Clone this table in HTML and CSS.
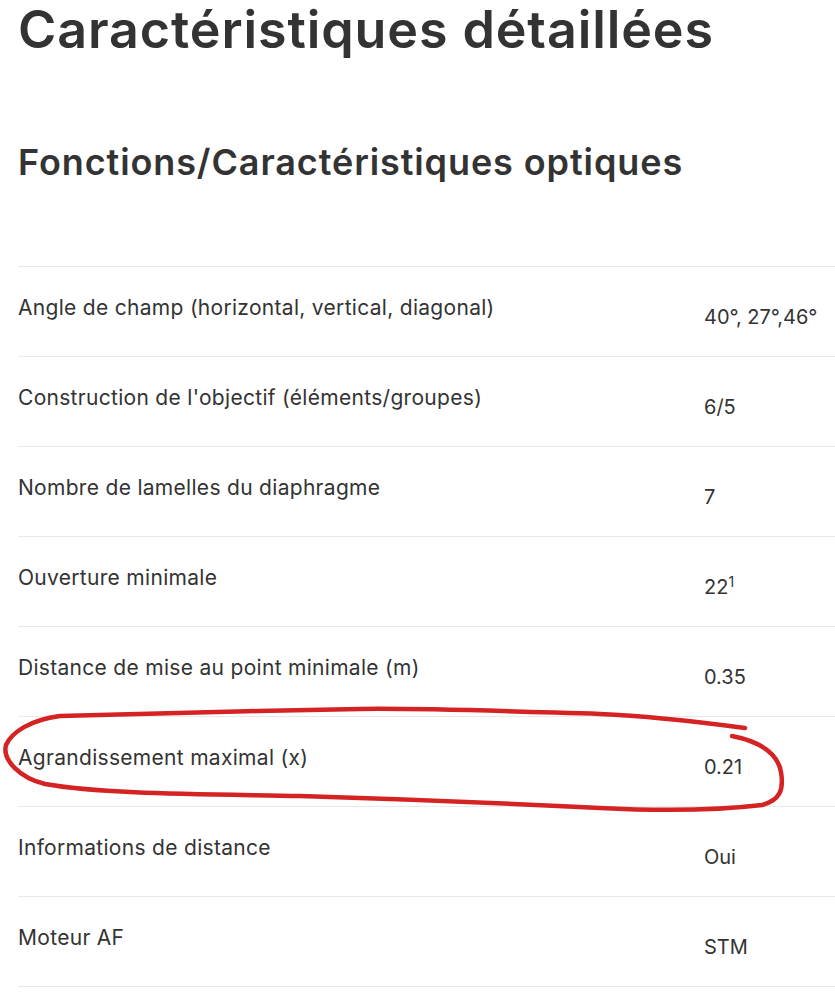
FILE: index.html
```html
<!DOCTYPE html>
<html lang="fr">
<head>
<meta charset="utf-8">
<title>Caractéristiques détaillées</title>
<link rel="stylesheet" href="styles.css">
</head>
<body>
<main class="page">
  <h1 class="title">Caractéristiques détaillées</h1>
  <h2 class="subtitle">Fonctions/Caractéristiques optiques</h2>
  <div class="specs">
    <div class="row"><div class="label">Angle de champ (horizontal, vertical, diagonal)</div><div class="value">40°, 27°,46°</div></div>
    <div class="row"><div class="label">Construction de l'objectif (éléments/groupes)</div><div class="value">6/5</div></div>
    <div class="row"><div class="label">Nombre de lamelles du diaphragme</div><div class="value">7</div></div>
    <div class="row"><div class="label">Ouverture minimale</div><div class="value">22<sup class="note">1</sup></div></div>
    <div class="row"><div class="label">Distance de mise au point minimale (m)</div><div class="value">0.35</div></div>
    <div class="row"><div class="label">Agrandissement maximal (x)</div><div class="value">0.21</div></div>
    <div class="row"><div class="label">Informations de distance</div><div class="value">Oui</div></div>
    <div class="row"><div class="label">Moteur AF</div><div class="value">STM</div></div>
    <div class="row row-empty"></div>
    <svg class="annotation" width="835" height="120" viewBox="0 700 835 120" aria-hidden="true">
      <path d="M745 728 C700 722 650 716 600 714 C500 711 420 708 360 709 C260 711 150 713 60 716 C30 720 12 732 6 745 C2 760 20 778 45 784 C100 794 200 794 300 796 C400 799 500 803 600 808 C660 811 720 810 762 805 C780 800 784 790 781 772 C778 755 762 742 732 736" fill="none" stroke="#d52222" stroke-width="4.5" stroke-linecap="round" stroke-linejoin="round"/>
    </svg>
  </div>
</main>
</body>
</html>
```
FILE: styles.css
```css
html, body {
  margin: 0;
  padding: 0;
  background: #ffffff;
}
body {
  font-family: Inter, "Open Sans", "DejaVu Sans", sans-serif;
  color: #333333;
  overflow: hidden;
}
.page {
  padding: 0 0 0 18px;
}
.title {
  margin: 0;
  font-size: 52px;
  font-weight: 600;
  line-height: 60px;
  letter-spacing: 0.9px;
  color: #333333;
}
.subtitle {
  margin: 80px 0 0 0;
  font-size: 36px;
  font-weight: 600;
  line-height: 44px;
  letter-spacing: 0.9px;
  color: #333333;
}
.specs {
  position: relative;
  margin-top: 82px;
}
.row {
  display: grid;
  grid-template-columns: 686px 1fr;
  height: 89px;
  border-top: 1px solid #e9e9e9;
}
.row-empty {
  height: 20px;
}
.label {
  padding-top: 29px;
  font-size: 21px;
  line-height: 24px;
  letter-spacing: 0.3px;
  color: #333333;
}
.value {
  padding-top: 38px;
  font-size: 20px;
  line-height: 24px;
  color: #333333;
  white-space: nowrap;
}
.note {
  font-size: 14px;
  line-height: 0;
  vertical-align: 7px;
}
.annotation {
  position: absolute;
  left: -18px;
  top: 434px;
  pointer-events: none;
}
```
